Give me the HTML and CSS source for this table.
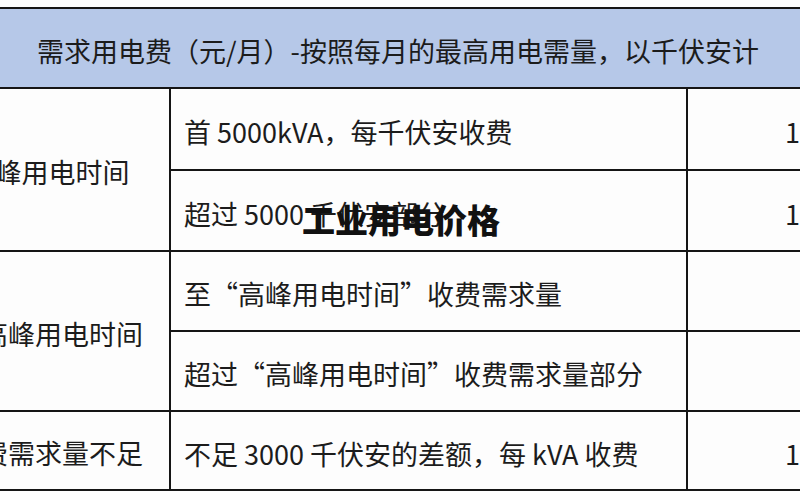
FILE: index.html
```html
<!DOCTYPE html>
<html lang="zh-CN">
<head>
<meta charset="utf-8">
<title>工业用电价格</title>
<link rel="stylesheet" href="styles.css">
</head>
<body>
<div class="page">
  <div class="table">
    <div class="cell head">需求用电费（元/月）-按照每月的最高用电需量，以千伏安计</div>
    <div class="cell cat r12">高峰用电时间</div>
    <div class="cell desc">首 5000kVA，每千伏安收费</div>
    <div class="cell val">1</div>
    <div class="cell desc">超过 5000 千伏安部分</div>
    <div class="cell val">1</div>
    <div class="cell cat r34">非高峰用电时间</div>
    <div class="cell desc">至“高峰用电时间”收费需求量</div>
    <div class="cell val"></div>
    <div class="cell desc">超过“高峰用电时间”收费需求量部分</div>
    <div class="cell val"></div>
    <div class="cell cat">收费需求量不足</div>
    <div class="cell desc">不足 3000 千伏安的差额，每 kVA 收费</div>
    <div class="cell val">1</div>
  </div>
  <div class="overlay">工业用电价格</div>
</div>
</body>
</html>
```

FILE: styles.css
```css
html, body {
  margin: 0;
  padding: 0;
  overflow: hidden;
  background: #fdfdfd;
}

.page {
  position: relative;
  width: 800px;
  height: 500px;
  overflow: hidden;
  font-family: "Noto Sans CJK SC", "Noto Sans", sans-serif;
  color: #1c1c1c;
}

.table {
  margin-top: 7px;
  margin-left: -74px;
  width: 940px;
  padding: 2px;
  background: #151515;
  display: grid;
  grid-template-columns: 241px 515px 180px;
  grid-template-rows: 78px 80px 79px 78px 78px 77px;
  gap: 2px;
}

.cell {
  background: #fdfdfd;
  font-size: 27px;
  line-height: 1;
  display: flex;
  align-items: center;
  white-space: nowrap;
  overflow: hidden;
}

.head {
  grid-column: 1 / 4;
  background: #b6c8e8;
  justify-content: center;
  padding-top: 5px;
}

.cat {
  justify-content: center;
  padding-top: 4px;
}

.r12 {
  grid-row: 2 / 4;
}

.r34 {
  grid-row: 4 / 6;
}

.desc {
  padding-left: 13px;
  padding-top: 5px;
}

.val {
  padding-left: 97px;
  padding-top: 5px;
}

.overlay {
  position: absolute;
  left: 302px;
  top: 203px;
  font-size: 33px;
  font-weight: 900;
  line-height: 1;
  color: #111;
  white-space: nowrap;
}
```
